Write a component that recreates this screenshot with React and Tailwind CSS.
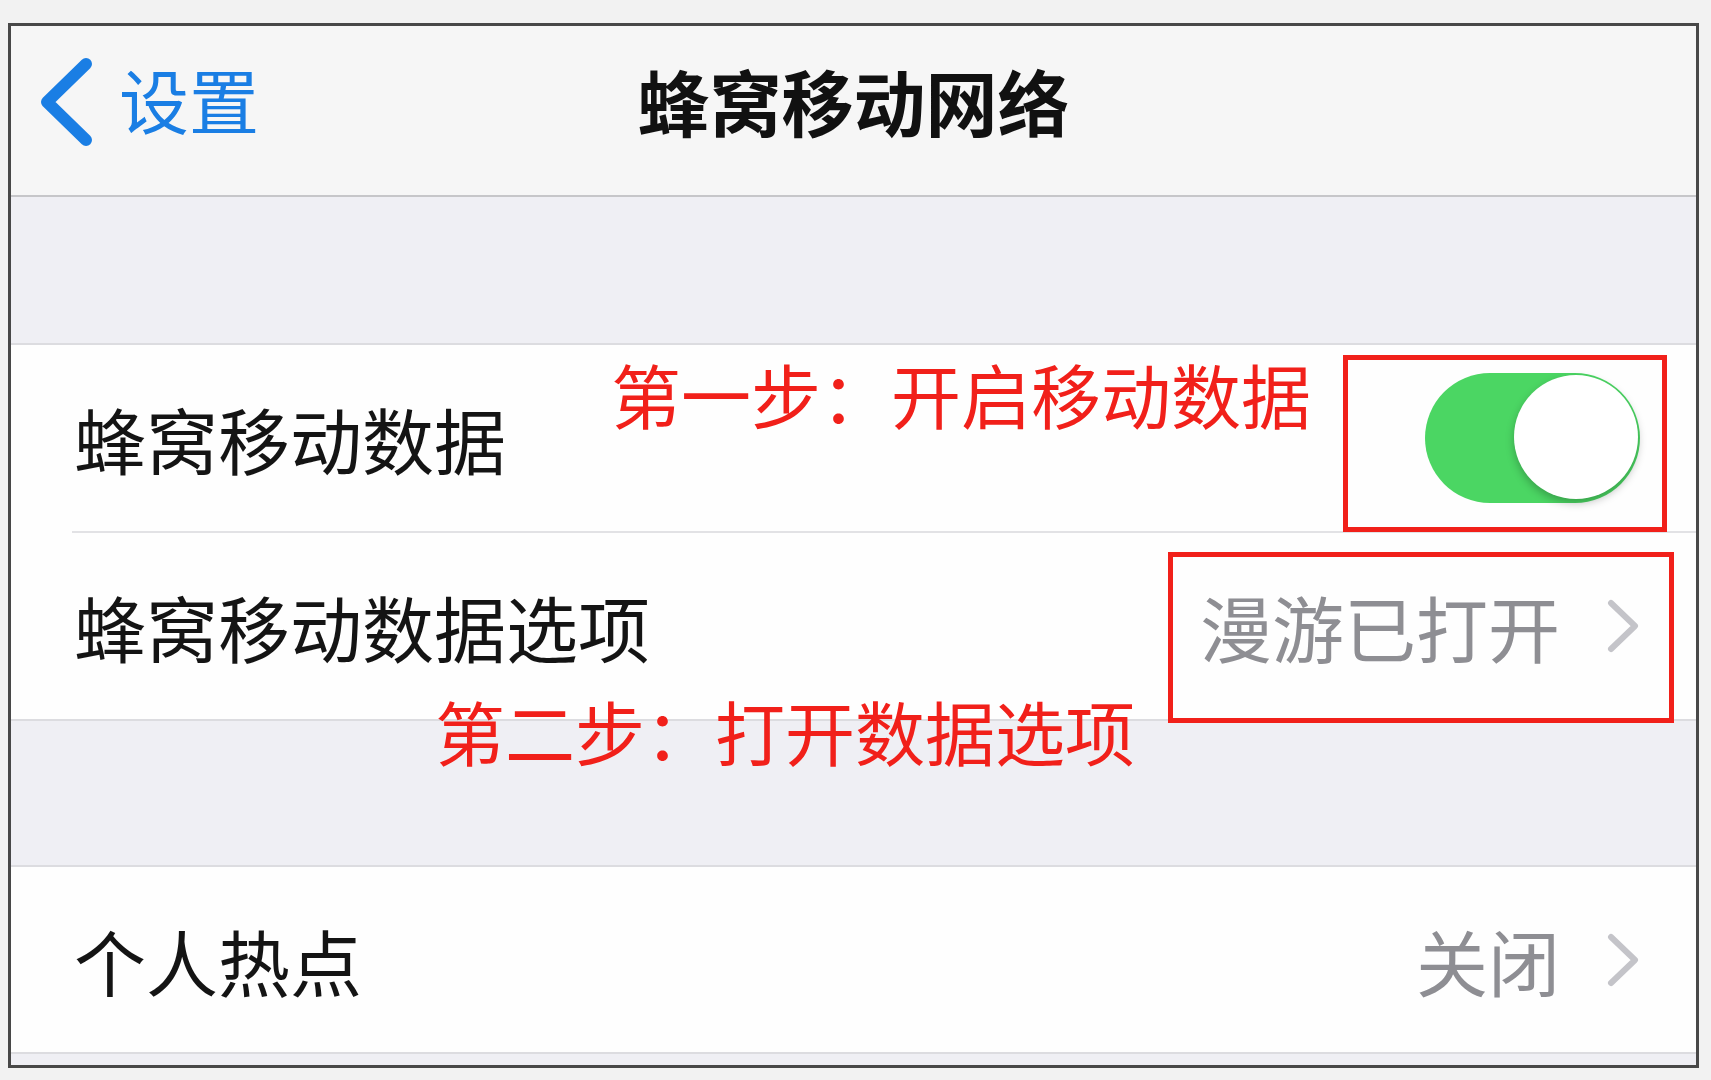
import React from 'react';

// iOS "蜂窝移动网络" settings screen with red tutorial annotations

const Chevron = ({ className = '' }) => (
  <svg viewBox="0 0 34 54" className={className} fill="none">
    <path d="M5 4 L29 27 L5 50" stroke="#c4c4c9" strokeWidth="6" strokeLinecap="round" strokeLinejoin="round" />
  </svg>
);

const Toggle = () => (
  <div className="relative h-[130px] w-[215px] rounded-full bg-[#4bd663]">
    <div className="absolute right-[2px] top-[2px] h-[124px] w-[124px] rounded-full bg-white shadow-[0_4px_8px_rgba(0,0,0,0.25)]" />
  </div>
);

const Row = ({ label, children, height }) => (
  <div className={`flex items-center justify-between bg-[#fefefe] pl-[63px] pr-[56px] ${height}`}>
    <span className="text-[72px] leading-none text-[#141414]">{label}</span>
    {children}
  </div>
);

const App = () => {
  return (
    <div className="h-[1080px] w-[1711px] overflow-hidden bg-[#f2f2f2] pl-[8px] pt-[23px] font-['Noto_Sans_CJK_SC','Noto_Sans',sans-serif]">
      <div className="relative flex h-[1045px] w-[1691px] flex-col border-[3px] border-[#484848] bg-[#efeff4]">
        {/* Navigation bar */}
        <div className="grid h-[171px] grid-cols-[1fr_auto_1fr] items-center border-b-2 border-[#c6c6c9] bg-[#f6f6f6]">
          <div className="-mt-[18px] flex items-center pl-[27px]">
            <svg viewBox="0 0 56 90" className="h-[90px] w-[56px]" fill="none">
              <path d="M48 7 L9 45 L48 83" stroke="#1a7ee4" strokeWidth="12" strokeLinecap="round" strokeLinejoin="round" />
            </svg>
            <span className="-mt-[6px] ml-[25px] text-[70px] leading-none text-[#1a7ee4]">设置</span>
          </div>
          <span className="-mt-[22px] text-[72px] font-semibold leading-none text-[#111]">蜂窝移动网络</span>
          <div />
        </div>

        <div className="h-[146px]" />

        {/* Cellular data group */}
        <div className="border-y-2 border-[#dcdce0] bg-[#fefefe]">
          <Row label="蜂窝移动数据" height="h-[186px]">
            <Toggle />
          </Row>
          <div className="ml-[61px] h-[2px] bg-[#e2e2e5]" />
          <Row label="蜂窝移动数据选项" height="h-[186px]">
            <div className="flex items-center gap-[46px]">
              <span className="text-[72px] leading-none text-[#8e8e93]">漫游已打开</span>
              <Chevron className="h-[54px] w-[34px]" />
            </div>
          </Row>
        </div>

        <div className="h-[144px]" />

        {/* Hotspot group */}
        <div className="border-y-2 border-[#dcdce0] bg-[#fefefe]">
          <Row label="个人热点" height="h-[185px]">
            <div className="flex items-center gap-[46px]">
              <span className="text-[72px] leading-none text-[#8e8e93]">关闭</span>
              <Chevron className="h-[54px] w-[34px]" />
            </div>
          </Row>
        </div>

        <div className="flex-1" />

        {/* Red annotations */}
        <div className="absolute left-[1332px] top-[329px] h-[177px] w-[324px] border-[5px] border-[#f1201a]" />
        <div className="absolute left-[1157px] top-[526px] h-[171px] w-[506px] border-[5px] border-[#f1201a]" />
        <span className="absolute left-[600px] top-[333px] whitespace-nowrap text-[70px] leading-none text-[#f1201a]">第一步：开启移动数据</span>
        <span className="absolute left-[424px] top-[670px] whitespace-nowrap text-[70px] leading-none text-[#f1201a]">第二步：打开数据选项</span>
      </div>
    </div>
  );
};

export default App;
